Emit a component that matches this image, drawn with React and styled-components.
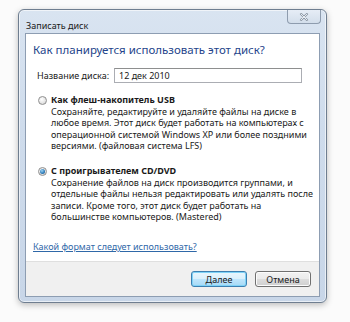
import React from "react";
import styled, { createGlobalStyle } from "styled-components";

const Global = createGlobalStyle`
  html, body { margin: 0; padding: 0; background: #fbfbfb; }
  body { font-family: "Noto Sans", "Open Sans", sans-serif; }
`;

const Page = styled.div`
  width: 350px;
  height: 322px;
  padding: 9px 0 0 18px;
  box-sizing: border-box;
`;

const Window = styled.div`
  width: 309px;
  height: 294px;
  box-sizing: border-box;
  border: 1px solid #6f7e90;
  border-radius: 6px;
  background: linear-gradient(180deg, #d9e4f1 0%, #cfdcec 40%, #c8d6e8 100%);
  box-shadow: 0 2px 6px rgba(0, 0, 0, 0.25), inset 0 0 0 1px rgba(255, 255, 255, 0.6);
  padding: 0 6px 5px 6px;
  display: flex;
  flex-direction: column;
`;

const TitleBar = styled.div`
  height: 23px;
  display: flex;
  align-items: flex-start;
  flex-shrink: 0;
`;

const Title = styled.div`
  font-size: 9px;
  color: #1a1a1a;
  padding-top: 9px;
  padding-left: 1px;
`;

const CloseBtn = styled.div`
  margin-left: auto;
  margin-right: -1px;
  width: 34px;
  height: 14px;
  box-sizing: border-box;
  border: 1px solid #8e9cae;
  border-top: none;
  border-radius: 0 0 4px 4px;
  background: linear-gradient(180deg, #e6edf6 0%, #d3deeb 100%);
  display: flex;
  align-items: center;
  justify-content: center;
`;

const Client = styled.div`
  flex: 1;
  border: 1px solid #8d9db2;
  background: #ffffff;
  display: flex;
  flex-direction: column;
`;

const Main = styled.div`
  flex: 1;
  padding: 8px 0 0 7px;
  display: flex;
  flex-direction: column;
`;

const Heading = styled.div`
  font-size: 11.5px;
  color: #24448a;
  line-height: 16px;
`;

const FormRow = styled.div`
  display: flex;
  align-items: center;
  margin-top: 10px;
  padding-left: 4px;
`;

const Label = styled.div`
  font-size: 9px;
  color: #1a1a1a;
  width: 77px;
`;

const Input = styled.div`
  width: 188px;
  height: 15px;
  box-sizing: border-box;
  border: 1px solid #abadb3;
  border-top-color: #8e8f8f;
  font-size: 9px;
  color: #1a1a1a;
  padding-left: 4px;
  line-height: 13px;
`;

const Option = styled.div`
  display: grid;
  grid-template-columns: 9px 1fr;
  column-gap: 4px;
  padding-left: 5px;
  margin-top: ${(p) => p.$mt}px;
  align-items: start;
`;

const Radio = styled.div`
  width: 9px;
  height: 9px;
  margin-top: 2px;
  box-sizing: border-box;
  border-radius: 50%;
  border: 1px solid #8f8f8f;
  background: radial-gradient(circle at 40% 35%, #ffffff 0%, #e6e6e6 55%, #c9c9c9 100%);
  display: flex;
  align-items: center;
  justify-content: center;
  &::after {
    content: "";
    display: ${(p) => (p.$checked ? "block" : "none")};
    width: 5px;
    height: 5px;
    border-radius: 50%;
    background: radial-gradient(circle at 40% 35%, #9fd5f5 0%, #2a79b8 60%, #1c4f80 100%);
  }
`;

const OptionTitle = styled.div`
  font-size: 9px;
  font-weight: 700;
  color: #1a1a1a;
  line-height: 12px;
`;

const OptionDesc = styled.div`
  grid-column: 2;
  font-size: 9px;
  color: #1a1a1a;
  line-height: 11.3px;
  width: 262px;
`;

const Link = styled.a`
  font-size: 9px;
  color: #2f68a8;
  text-decoration: underline;
  margin-top: 18px;
  cursor: pointer;
`;

const Footer = styled.div`
  height: 34px;
  flex-shrink: 0;
  background: #f0f0f0;
  border-top: 1px solid #dfdfdf;
  display: flex;
  align-items: center;
  justify-content: flex-end;
  gap: 8px;
  padding-right: 8px;
`;

const Button = styled.div`
  width: 56px;
  height: 16px;
  box-sizing: border-box;
  border-radius: 3px;
  border: 1px solid ${(p) => (p.$primary ? "#3c7fb1" : "#707070")};
  background: ${(p) =>
    p.$primary
      ? "linear-gradient(180deg, #eaf6fd 0%, #d9f0fc 50%, #bee6fd 51%, #a7d9f5 100%)"
      : "linear-gradient(180deg, #f2f2f2 0%, #ebebeb 50%, #dddddd 51%, #cfcfcf 100%)"};
  box-shadow: inset 0 0 0 1px ${(p) => (p.$primary ? "#7fd3f7" : "#fcfcfc")};
  font-size: 9px;
  color: #1a1a1a;
  display: flex;
  align-items: center;
  justify-content: center;
`;

export default function App() {
  return (
    <>
      <Global />
      <Page>
        <Window>
          <TitleBar>
            <Title>Записать диск</Title>
            <CloseBtn>
              <svg width="10" height="8" viewBox="0 0 10 8">
                <path d="M2 1 L8 7 M8 1 L2 7" stroke="#8c98a6" strokeWidth="2.2" strokeLinecap="round" />
                <path d="M2 1 L8 7 M8 1 L2 7" stroke="#f4f6f9" strokeWidth="0.9" strokeLinecap="round" />
              </svg>
            </CloseBtn>
          </TitleBar>
          <Client>
            <Main>
              <Heading>Как планируется использовать этот диск?</Heading>
              <FormRow>
                <Label>Название диска:</Label>
                <Input>12 дек 2010</Input>
              </FormRow>
              <Option $mt={11}>
                <Radio />
                <OptionTitle>Как флеш-накопитель USB</OptionTitle>
                <OptionDesc>
                  Сохраняйте, редактируйте и удаляйте файлы на диске в любое время. Этот диск будет
                  работать на компьютерах с операционной системой Windows XP или более поздними
                  версиями. (файловая система LFS)
                </OptionDesc>
              </Option>
              <Option $mt={14}>
                <Radio $checked />
                <OptionTitle>С проигрывателем CD/DVD</OptionTitle>
                <OptionDesc>
                  Сохранение файлов на диск производится группами, и отдельные файлы нельзя
                  редактировать или удалять после записи. Кроме того, этот диск будет работать на
                  большинстве компьютеров. (Mastered)
                </OptionDesc>
              </Option>
              <Link>Какой формат следует использовать?</Link>
            </Main>
            <Footer>
              <Button $primary>Далее</Button>
              <Button>Отмена</Button>
            </Footer>
          </Client>
        </Window>
      </Page>
    </>
  );
}
